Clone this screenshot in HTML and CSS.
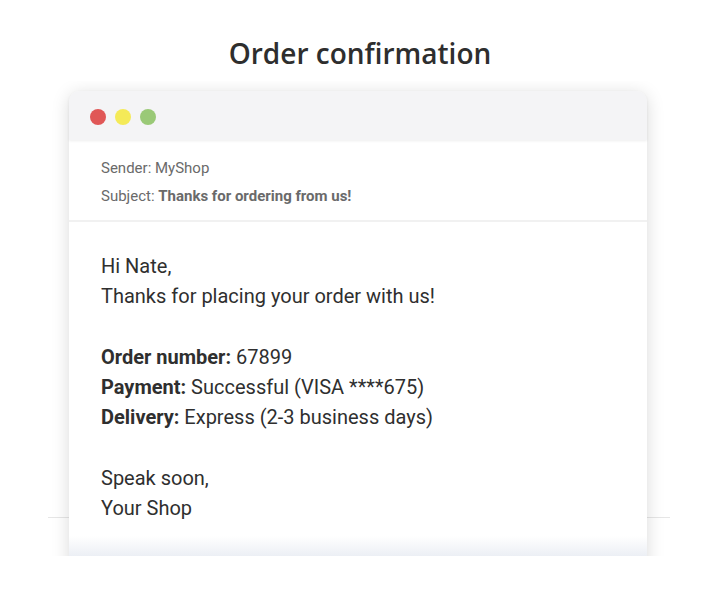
FILE: index.html
```html
<!DOCTYPE html>
<html lang="en">
<head>
<meta charset="UTF-8">
<meta name="viewport" content="width=device-width, initial-scale=1.0">
<title>Order confirmation</title>
<link rel="stylesheet" href="styles.css">
</head>
<body>

<h1 class="title">Order confirmation</h1>

<div class="stage">
  <div class="window">
    <div class="titlebar">
      <span class="dot red"></span>
      <span class="dot yellow"></span>
      <span class="dot green"></span>
    </div>

    <div class="mail-head">
      <p>Sender: MyShop</p>
      <p>Subject: <b>Thanks for ordering from us!</b></p>
    </div>

    <div class="mail-body">
      <p>Hi Nate,<br>Thanks for placing your order with us!</p>
      <p>
        <b>Order number:</b> 67899<br>
        <b>Payment:</b> Successful (VISA ****675)<br>
        <b>Delivery:</b> Express (2-3 business days)
      </p>
      <p>Speak soon,<br>Your Shop</p>
    </div>
  </div>
</div>

</body>
</html>
```

FILE: styles.css
```css
body {
  margin: 0;
  padding: 0;
  background-color: #fff;
  font-family: Roboto, "Liberation Sans", sans-serif;
}

.title {
  margin: 0;
  padding-top: 34px;
  text-align: center;
  font-family: "Open Sans", "Noto Sans", sans-serif;
  font-weight: 600;
  font-size: 28px;
  line-height: 38px;
  color: #2e2e2e;
}

/* clipped area the window sits in */
.stage {
  position: relative;
  margin-top: 9px;
  height: 465px;
  padding: 10px 73px 0 69px;
  overflow: hidden;
}

/* faint floor line behind the window */
.stage::before {
  content: "";
  position: absolute;
  left: 48px;
  right: 50px;
  top: 436px;
  height: 1px;
  background-color: #e6e6e6;
}

.window {
  position: relative;
  height: 520px;
  background-color: #fff;
  border-radius: 10px 10px 0 0;
  box-shadow: 0 3px 18px rgba(0, 0, 0, 0.15);
}

/* bluish fade at the cut edge */
.window::after {
  content: "";
  position: absolute;
  left: 0;
  right: 0;
  top: 445px;
  height: 20px;
  background: linear-gradient(rgba(238, 241, 247, 0), #eceff5);
}

.titlebar {
  display: flex;
  align-items: center;
  gap: 9px;
  height: 49px;
  box-sizing: border-box;
  padding: 2px 0 0 21px;
  background-color: #f4f4f6;
  border-radius: 10px 10px 0 0;
  box-shadow: 0 1px 3px rgba(0, 0, 0, 0.07);
}

.dot {
  width: 16px;
  height: 16px;
  border-radius: 50%;
}

.red { background-color: #e05757; }
.yellow { background-color: #f4ea58; }
.green { background-color: #9ac977; }

.mail-head {
  padding: 14px 32px 10px;
  border-bottom: 2px solid #f1f1f1;
  font-size: 15px;
  line-height: 28px;
  color: #6a6a6a;
}

.mail-head p {
  margin: 0;
}

.mail-body {
  padding: 29px 32px 0;
  font-size: 20px;
  line-height: 30.3px;
  color: #2f2f2f;
}

.mail-body p {
  margin: 0 0 30.3px;
}
```
